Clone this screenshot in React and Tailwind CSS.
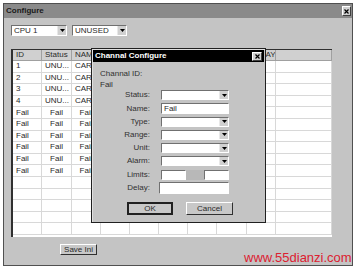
import React from 'react'

const cols = 'grid grid-cols-[29px_30px_29px_29px_29px_29px_29px_30px_29px_1fr]'
// columns 4-8 sit under the dialog, their titles can't be read
const heads = ['ID', 'Status', 'NAME', '', '', '', '', '', 'DELAY', '']

const rows = [
  ['1', 'UNU...', 'CAR..'],
  ['2', 'UNU...', 'CAR..'],
  ['3', 'UNU...', 'CAR..'],
  ['4', 'UNU...', 'CAR..'],
  ['Fail', 'Fail', 'Fail'],
  ['Fail', 'Fail', 'Fail'],
  ['Fail', 'Fail', 'Fail'],
  ['Fail', 'Fail', 'Fail'],
  ['Fail', 'Fail', 'Fail'],
  ['Fail', 'Fail', 'Fail'],
  [],
  [],
  [],
  [],
  [],
]

function Arrow() {
  return (
    <div className="flex h-full w-[9px] items-center justify-center border-l border-[#e8e8e8] bg-[#d0d0d0]">
      <svg width="5" height="3" viewBox="0 0 5 3">
        <path d="M0 0h5L2.5 3z" fill="#000" />
      </svg>
    </div>
  )
}

function Combo({ value, className }) {
  return (
    <div className={`flex items-center border border-t-[#707070] border-l-[#707070] border-b-white border-r-white bg-white ${className}`}>
      <span className="flex-1 truncate pl-[2px] leading-none">{value}</span>
      <Arrow />
    </div>
  )
}

function Field({ value, className }) {
  return (
    <div className={`flex items-center border border-t-[#707070] border-l-[#707070] border-b-white border-r-white bg-white pl-[2px] leading-none ${className}`}>
      {value}
    </div>
  )
}

function CloseBtn({ className }) {
  return (
    <div className={`flex items-center justify-center border border-t-white border-l-white border-b-[#404040] border-r-[#404040] bg-[#d0d0d0] ${className}`}>
      <svg width="5" height="5" viewBox="0 0 5 5">
        <path d="M0.5 0.5l4 4M4.5 0.5l-4 4" stroke="#000" strokeWidth="1.2" />
      </svg>
    </div>
  )
}

function Button({ children, def, className }) {
  return (
    <div
      className={`flex items-center justify-center bg-[#c8c8c8] leading-none ${
        def ? 'border-2 border-[#202020]' : 'border border-t-white border-l-white border-b-[#303030] border-r-[#303030]'
      } ${className}`}
    >
      {children}
    </div>
  )
}

const labels = ['Status:', 'Name:', 'Type:', 'Range:', 'Unit:', 'Alarm:', 'Limits:', 'Delay:']

export default function App() {
  return (
    <div className="relative h-[272px] w-[358px] overflow-hidden bg-white p-[3px] font-['Liberation_Sans',Arial,sans-serif] text-[8px] text-[#2a2a2a]">
      {/* main window */}
      <div className="flex h-[263px] w-[350px] flex-col border border-[#505050] bg-[#c4c4c4]">
        <div className="flex h-[14px] items-center justify-between bg-[#8a8a8a] pl-[2px] pr-[1px]">
          <span className="font-bold text-[#1a1a1a]">Configure</span>
          <CloseBtn className="h-[10px] w-[9px]" />
        </div>

        <div className="mt-[7px] flex gap-[5px] pl-[7px]">
          <Combo value="CPU 1" className="h-[11px] w-[56px]" />
          <Combo value="UNUSED" className="h-[11px] w-[55px]" />
        </div>

        <div className="ml-[7px] mt-[13px] flex h-[188px] w-[321px] flex-col border-l-2 border-t border-[#303030] bg-white">
          <div className={`${cols} h-[11px] bg-[#d0d0d0]`}>
            {heads.map((h, i) => (
              <div key={i} className="flex items-center overflow-hidden whitespace-nowrap border-r border-b border-[#a0a0a0] pl-[3px] leading-none">
                {h}
              </div>
            ))}
          </div>
          {rows.map((r, ri) => (
            <div key={ri} className={`${cols} h-[11.6px]`}>
              {heads.map((_, ci) => (
                <div
                  key={ci}
                  className={`flex items-center overflow-hidden whitespace-nowrap border-r border-b border-[#d8d8d8] leading-none ${
                    ci === 0 || (r[1] !== 'Fail' && ci < 3) ? 'pl-[3px]' : 'justify-center'
                  }`}
                >
                  {r[ci] || ''}
                </div>
              ))}
            </div>
          ))}
        </div>

        <div className="ml-[56px] mt-[7px]">
          <Button className="h-[11px] w-[37px]">Save Ini</Button>
        </div>
      </div>

      {/* dialog */}
      <div className="absolute left-[91px] top-[48px] flex h-[175px] w-[175px] flex-col border border-[#202020] bg-[#c4c4c4] shadow-[inset_1px_1px_0_#e0e0e0]">
        <div className="mx-[1px] mt-[1px] flex h-[12px] items-center justify-between bg-black pl-[2px] pr-[2px]">
          <span className="font-bold text-white">Channal Configure</span>
          <CloseBtn className="h-[9px] w-[10px]" />
        </div>
        <div className="ml-[8px] mt-[8px] leading-none text-[#303030]">Channal ID:</div>
        <div className="ml-[8px] mt-[3px] leading-none text-[#303030]">Fail</div>
        <div className="mt-[1px] flex flex-col gap-[2.4px]">
          {labels.map((l) => (
            <div key={l} className="flex h-[10.8px] items-center">
              <span className="w-[58px] text-right leading-none text-[#303030]">{l}</span>
              <div className="ml-[11px] flex w-[68px]">
                {l === 'Name:' && <Field value="Fail" className="h-[11px] w-[68px]" />}
                {l === 'Delay:' && <Field value="" className="-ml-[2px] h-[12px] w-[70px]" />}
                {l === 'Limits:' && (
                  <div className="flex w-[68px] items-stretch">
                    <Field value="" className="h-[10px] w-[25px]" />
                    <div className="h-[10px] w-[18px] bg-[#b8b8b8]" />
                    <Field value="" className="h-[10px] w-[25px]" />
                  </div>
                )}
                {!['Name:', 'Delay:', 'Limits:'].includes(l) && <Combo value="" className="h-[10px] w-[68px]" />}
              </div>
            </div>
          ))}
        </div>
        <div className="mt-[9px] flex gap-[13px] pl-[35px]">
          <Button def className="h-[13px] w-[46px]">OK</Button>
          <Button className="h-[13px] w-[47px]">Cancel</Button>
        </div>
      </div>

      {/* watermark */}
      <div className="absolute left-[244px] top-[251px] text-[13px] leading-none text-[#dc2030]">
        www.55dianzi.com
      </div>
    </div>
  )
}
